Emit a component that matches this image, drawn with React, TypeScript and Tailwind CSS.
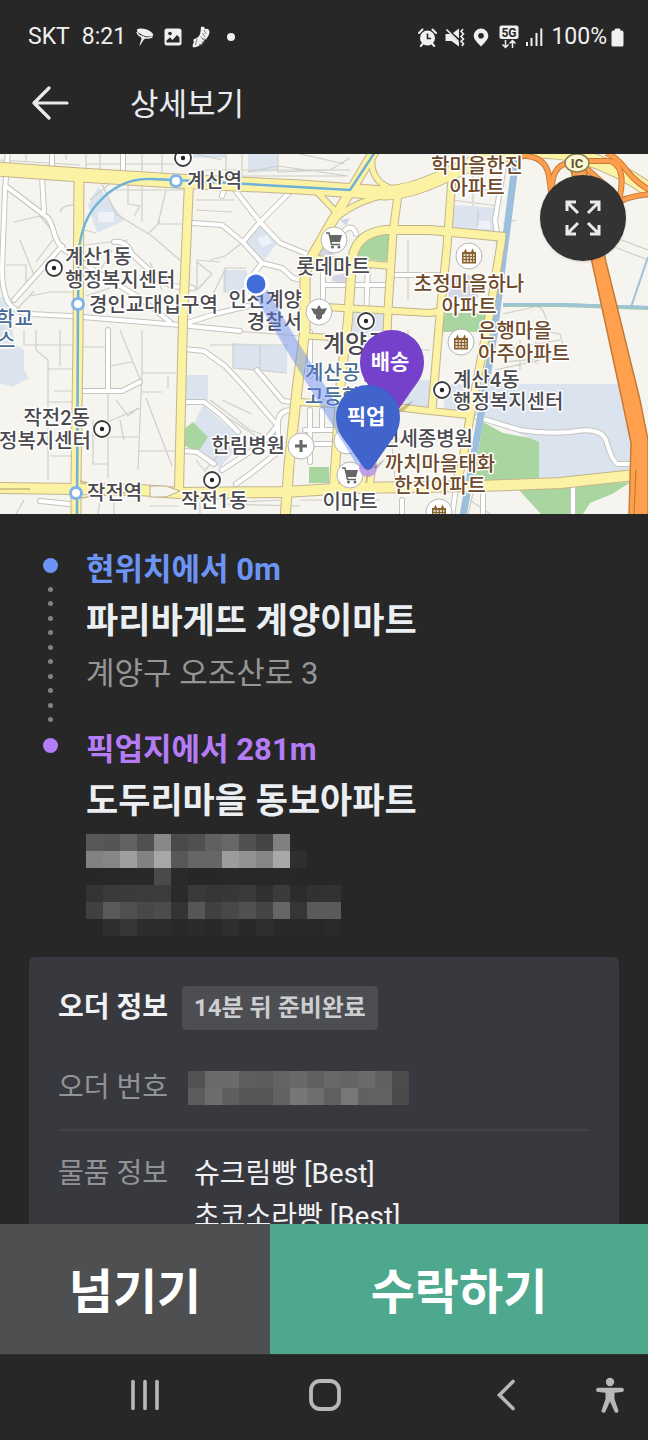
import type { ReactNode } from "react";

type MosaicProps = {
  rows: string[]
  className?: string
}

type StopProps = {
  distance: string
  name: string
  color: string
  dot: string
  last?: boolean
  children: ReactNode
}

type LabelProps = {
  x: number
  y: number
  text: string
  fill?: string
  anchor?: "start" | "middle" | "end"
  big?: boolean
}

const CELL = 17;

// two hex digits of grey per cell, ".." leaves the cell empty
const ADDRESS_MOSAIC = [
  "58 55 62 50 88 4a 50 60 68 50 44 80 .. .. ..",
  "82 86 9e 82 a8 58 66 66 9c 92 86 a8 2f .. ..",
  "27 28 28 29 4a 2a .. .. 28 28 28 28 .. .. ..",
  "34 3a 3b 3c 3c 2a 3a 36 37 3a 30 3b 2c 31 32",
  "40 5a 50 48 4c 34 56 40 48 50 45 66 36 5a 5a",
  ".. 2f 36 2c 2c 29 2b 29 2e 29 2e 29 28 28 2a",
];

const ORDER_MOSAIC = [
  "52 6a 6b 5e 5c 64 69 60 68 65 6b 60 4c",
  "5c 6d 5f 56 56 62 77 6e 60 78 61 63 4b",
];

const WHITE_ROADS = [
  "M8 150 L5 190 L2 270 Q2 290 8 302 Q15 313 30 314 L70 316 L180 325 L240 331",
  "M7 187 L48 218 Q52 224 55 236 Q60 250 72 254 L90 268 L140 298 L170 322",
  "M62 246 L14 300 M52 154 V167 M42 176 L44 212 M123 154 V172",
  "M114 242 Q126 240 132 254 L160 280 L172 286 L193 288",
  "M187 323 L215 314 L248 306",
  "M192 223 L222 225 L243 242 L262 263 L282 268 L293 278 L302 280",
  "M235 190 L260 222 L280 243 L307 254 M290 192 L260 222 L243 242 M262 263 L252 276",
  "M108 330 V390 M82 391 H122 L140 382",
  "M184 349 L204 351 L225 366 L242 384 L277 425",
  "M184 402 H204 L222 416 L238 432 M184 451 L197 452 L214 464",
  "M257 370 L283 401 L293 402 M292 410 Q279 410 278 422 V452",
  "M278 425 L262 444 L222 470 M278 452 L250 474 L236 484",
  "M310 332 V376 M310 410 V462 M305 430 H336 M312 444 H336 M322 410 V430",
  "M368 266 L366 320 M325 285 H390 M323 270 V304 M390 275 H438",
  "M343 232 Q352 222 356 234 M224 190 L222 196",
  "M477 417 L520 430 Q545 434 570 432 Q600 426 606 440 Q612 462 618 464 H632",
  "M573 486 V516 M483 488 V516 M456 488 L452 516 M402 500 V516 M40 501 L70 504",
  "M505 160 L495 220 L498 240",
];

const MINOR_ROADS =
  "M0 160 L80 165 M26 154 V163 M86 154 V173 L150 176 M100 154 V170 M142 154 V174 M162 154 V174 M86 164 H176 " +
  "M60 212 Q62 204 78 205 M66 154 V160 M14 222 L40 216 L60 240 M20 240 L36 280 M36 262 L56 236 M6 265 H26 V290 M30 296 L50 292 H74 M18 308 L34 291 " +
  "M100 180 L116 214 L124 219 L152 236 L182 262 M84 230 L96 233 M90 200 L112 182 M116 190 H184 M142 182 V222 M128 182 V204 L140 206 L134 216 M160 222 L148 234 M166 190 L158 224 H182 " +
  "M84 245 L128 240 M90 284 Q104 266 112 250 M86 296 L110 288 M150 262 L162 290 M196 260 L220 262 M196 200 H235 M196 210 L232 212 M197 262 V290 L212 274 Z " +
  "M24 330 V345 H74 M36 330 V350 L48 360 V480 M60 330 V366 M48 369 H74 M54 391 H72 M48 402 H74 M50 456 H74 " +
  "M108 390 V478 M82 347 H108 M120 330 L142 384 M110 366 L132 362 M142 330 V370 L138 470 M142 373 H176 M108 422 L140 408 M93 420 V464 H108 M108 437 H138 M142 392 H162 M168 376 V388 M116 400 L128 416 L138 408 M138 451 H176 M146 398 L172 466 M120 420 L124 440 " +
  "M195 154 L222 160 M226 154 V182 M242 154 V176 M248 172 L278 166 L348 176 M278 154 V172 L330 170 L350 158 M300 154 L345 164 M196 170 H350 M210 176 H345 " +
  "M210 260 L225 256 L243 242 M210 300 L225 270 M225 292 V268 H246 M223 330 L300 336 M210 345 H288 M233 343 V368 L287 373 M260 345 V370 M210 400 L250 430 L278 440 M216 410 L256 436 M222 400 L252 414 M196 460 L228 500 M232 440 L205 470 " +
  "M300 500 H380 M240 502 L280 500 M150 506 H178 M100 500 L98 514 M114 502 V514 M24 500 L16 514 M200 500 V514 M222 504 L300 506 M384 440 L430 440 M390 420 L395 480 " +
  "M408 240 V300 M408 330 V400 M395 350 H430 M452 200 L498 206 M473 172 V206 M460 190 H498 M478 210 V226 M503 224 L516 220 " +
  "M503 314 L530 308 Q545 300 548 330 M500 350 L560 340 M505 362 L566 356 L560 334 L540 330 M520 340 V370 M536 336 V364 M495 370 L540 360 M616 238 L648 250 M612 246 L648 260 M470 500 L490 514 M474 490 L468 514";

const YELLOW_ROADS = [
  { d: "M-5 169 L80 175 L176 181 L300 187 L385 193 Q410 192 440 178 L480 160 Q530 145 580 156 Q620 168 652 192", w: 13 },
  { d: "M79 175 L78 340 L76 480 V520", w: 9 },
  { d: "M189 183 L183 320 L179 490", w: 8 },
  { d: "M-5 488 L76 489 L140 490 L178 493 L285 492 L350 488 L480 486 L560 483 L635 475", w: 10 },
  { d: "M375 150 L350 192 L333 220 L310 260 L305 275 V330 L297 390 L289 465 L285 520", w: 9 },
  { d: "M505 237 L430 230 H385 Q354 234 352 262 L348 320 L341 380 L334 485", w: 8 },
  { d: "M398 195 L393 232 L388 310 L384 400", w: 7 },
  { d: "M452 178 L447 247 L440 315 L432 410", w: 7 },
  { d: "M502 237 L490 312 L480 365 L470 417 L462 465 L455 485", w: 7 },
  { d: "M307 258 L390 266 M308 306 L430 313 L442 311 M298 402 L335 404 M395 407 L430 411 L468 415", w: 6 },
  { d: "M317 192 L338 214 M336 218 Q360 198 397 193 M372 158 Q370 180 390 188 M306 336 L340 338", w: 5 },
  { d: "M372 425 L362 485 M377 425 L370 485", w: 6 },
];

const RINGS = [[183, 158], [54, 268], [102, 429], [212, 480], [366, 321], [442, 390]];
const STATIONS = [[176, 181], [78, 304], [76, 493]];

function Mosaic({ rows, className }: MosaicProps) {
  const grid = rows.map((row) => row.split(" "));
  const width = grid[0].length * CELL;
  const height = grid.length * CELL;
  return (
    <svg className={className} width={width} height={height} viewBox={`0 0 ${width} ${height}`} shapeRendering="crispEdges" aria-hidden="true">
      {grid.map((cells, r) =>
        cells.map((v, c) =>
          v === ".." ? null : (
            <rect key={`${r}-${c}`} x={c * CELL} y={r * CELL} width={CELL} height={CELL} fill={`#${v}${v}${v}`} />
          )
        )
      )}
    </svg>
  );
}

function StatusBar() {
  return (
    <div className="flex h-[74px] shrink-0 items-center justify-between pr-6 pl-7 text-[23px] text-[#f0f0f0]">
      <div className="flex items-center">
        <span>SKT</span>
        <span className="ml-3">8:21</span>
        <svg className="ml-2.5" width="18" height="20" viewBox="0 0 18 20">
          <ellipse cx="9" cy="5.500" rx="8.500" ry="3.300" fill="currentColor" transform="rotate(18 9 5.500)" />
          <path d="M1 5 Q2 9 8 10.500 Q14 12 16.500 9.500" fill="none" stroke="currentColor" strokeWidth="1.400" />
          <path d="M4.500 8 L10 10.500 L7.500 13 L4 18.500 L3.500 18 L5.500 12 Z" fill="currentColor" />
        </svg>
        <svg className="ml-2.5" width="18" height="18" viewBox="0 0 18 18">
          <rect x="0.500" y="0.500" width="17" height="17" rx="2.500" fill="currentColor" />
          <path d="M2.500 14.500 V12.500 L6 9.500 L8.500 12 L13 7 L15.500 9.500 V14.500 Z" fill="#272727" />
          <circle cx="6" cy="5.500" r="1.800" fill="#272727" />
        </svg>
        <svg className="ml-2.5" width="18" height="22" viewBox="0 0 18 22">
          <path d="M9 1 Q12 -0.500 13 3 Q17 2 17.500 6 Q17 11 12.500 14 Q9 21 1.500 21.500 Q-0.500 20 2 16 Q0 13 4 12.500 Q8 10 8.500 6 Z" fill="currentColor" />
          <path d="M12 4 L14 8 M10.500 7 L13 11 M9 10.500 L11.500 14 M5 13 L3.500 19 M11 13 L15 13.500 M9.500 16 L13 16.500 M7 18.500 L11 19" stroke="#666" strokeWidth="0.800" fill="none" />
        </svg>
        <span className="ml-[17px] size-2 rounded-full bg-[#f0f0f0]" />
      </div>
      <div className="flex items-center">
        <svg width="19" height="19" viewBox="0 0 19 19">
          <circle cx="9.500" cy="10" r="7.500" fill="currentColor" />
          <path d="M1 5 L4.500 1.500 M18 5 L14.500 1.500 M5 15.500 L2.800 18 M14 15.500 L16.200 18" stroke="currentColor" strokeWidth="2" strokeLinecap="round" />
          <path d="M9.500 5.500 V10.500 H13" stroke="#272727" strokeWidth="1.600" fill="none" />
        </svg>
        <svg className="ml-2" width="20" height="19" viewBox="0 0 20 19">
          <path d="M0.500 6 H5 L14 14.500 V18.500 L6.500 13 H0.500 Z" fill="currentColor" />
          <path d="M8 5 L14 0.500 V10.500 Z" fill="currentColor" />
          <path d="M1.500 1.500 L13.500 13.500" stroke="currentColor" strokeWidth="1.600" />
          <path d="M18 1 L16 3.500 L18.500 6 L16 8.500 L18.500 11 L16 13.500 L18.500 15.500 L17 18" stroke="currentColor" strokeWidth="1.600" fill="none" />
        </svg>
        <svg className="ml-2" width="16" height="19" viewBox="0 0 16 19">
          <path fillRule="evenodd" d="M8 0.500 A7.300 7.300 0 0 0 0.700 7.800 C0.700 12 5 15 8 18.500 C11 15 15.300 12 15.300 7.800 A7.300 7.300 0 0 0 8 0.500 Z M8 5 A2.800 2.800 0 1 1 8 10.600 A2.800 2.800 0 1 1 8 5 Z" fill="currentColor" />
        </svg>
        <svg className="ml-2.5" width="20" height="24" viewBox="0 0 20 24">
          <rect x="0.500" y="0.500" width="19" height="13.500" rx="2" fill="currentColor" />
          <text x="10" y="11.500" textAnchor="middle" fontSize="12" fontWeight="700" fill="#272727">5G</text>
          <path d="M6.500 15 V22 M3.500 19.500 L6.500 22.500 L9.500 19.500 M13.500 23 V16 M10.500 18.500 L13.500 15.500 L16.500 18.500" stroke="currentColor" strokeWidth="1.500" fill="none" />
        </svg>
        <svg className="ml-1.5" width="18" height="18" viewBox="0 0 18 18">
          <path d="M2 14 V18 M6.500 10 V18 M11.500 5 V18 M16.300 0.500 V18" stroke="currentColor" strokeWidth="2" />
        </svg>
        <span className="ml-2">100%</span>
        <svg className="ml-1" width="13" height="19" viewBox="0 0 13 19">
          <path d="M3.500 2.500 Q3.500 0.500 5 0.500 H8 Q9.500 0.500 9.500 2.500 H10.500 Q12.500 2.500 12.500 4.500 V17 Q12.500 18.500 11 18.500 H2 Q0.500 18.500 0.500 17 V4.500 Q0.500 2.500 2.500 2.500 Z" fill="currentColor" />
        </svg>
      </div>
    </div>
  );
}

function MapLabel({ x, y, text, fill = "#4a4a4f", anchor = "start", big }: LabelProps) {
  return (
    <text x={x} y={y} fill={fill} textAnchor={anchor} fontSize={big ? 24 : 20} fontWeight="500" stroke="#fff" strokeWidth="3" strokeLinejoin="round" paintOrder="stroke">
      {text}
    </text>
  );
}

function Poi({ x, y, children }: { x: number; y: number; children?: ReactNode }) {
  return (
    <g transform={`translate(${x} ${y})`}>
      <circle r="13" fill="#fff" stroke="#b5b5b5" strokeWidth="1" />
      {children}
    </g>
  );
}

function Cart() {
  return (
    <g>
      <path d="M-5 -5 H8 L6 2 H-3 Z" fill="#666" />
      <path d="M-8 -7 H-5 L-2.500 4.500 H6" fill="none" stroke="#666" strokeWidth="1.500" />
      <circle cx="-1.500" cy="7" r="1.500" fill="#666" />
      <circle cx="5" cy="7" r="1.500" fill="#666" />
    </g>
  );
}

function Building() {
  return (
    <g>
      <path d="M-7 -4 H-5 L-3.500 -7.500 L-2 -4 H2 L3.500 -7.500 L5 -4 H7 V7.500 H-7 Z" fill="#8a6230" />
      <path d="M-5.500 -1 H5.500 M-5.500 2 H5.500 M-5.500 5 H5.500" stroke="#fff" strokeWidth="1.600" strokeDasharray="2 1.200" />
    </g>
  );
}

function Pin({ x, y, color, text }: { x: number; y: number; color: string; text: string }) {
  return (
    <g transform={`translate(${x} ${y})`}>
      <path d="M-32 0 A32 32 0 0 1 32 0 C32 13 26 20 20 28 L4 51 Q0 55 -4 51 L-20 28 C-26 20 -32 13 -32 0 Z" fill={color} />
      <text x="-2" y="7" textAnchor="middle" fontSize="21" fontWeight="700" fill="#fff">{text}</text>
    </g>
  );
}

function AreaMap() {
  const brown = "#6e4a2c";
  const blue = "#4a6c92";
  return (
    <svg className="block h-full w-full" viewBox="0 154 648 360" preserveAspectRatio="xMidYMid slice" role="img" aria-label="지도">
      <rect x="0" y="154" width="648" height="360" fill="#f5f4ee" />

      <g fill="#dbe4ee">
        <path d="M98 187 L125 220 L97 233 L88 205 Z" />
        <path d="M260 222 L278 242 L262 263 L243 242 Z" />
        <path d="M248 153 H278 V171 L248 173 Z M193 153 H226 V158 H193 Z" />
        <path d="M223 270 H247 V293 H223 Z M455 205 L497 208 L495 232 L452 228 Z" />
        <path d="M183 375 H208 V400 H183 Z M233 343 L287 346 V373 L233 368 Z" />
        <path d="M203 405 L243 440 L220 468 L195 452 L183 445 Z" />
        <path d="M0 297 H10 L14 344 L24 350 L24 370 L29 378 L12 387 L0 383 Z" />
        <path d="M352 310 H385 V337 H352 Z M395 380 H440 L436 410 L395 405 Z" />
        <path d="M446 384 H618 L631 443 V474 L539 478 V442 L500 425 L477 415 H443 Z" />
      </g>
      <path d="M450 275 H478 V298 H448 Z M340 220 L350 218 L346 226 Z M332 276 L347 273 V283 L332 281 Z M318 245 L335 255 H320 Z" fill="#d5d5e8" />
      <path d="M98 212 h16 v10 h-16 Z M257 238 l10 -3 l5 8 l-10 4 Z M478 221 h12 v8 h-12 Z" fill="#eef2f8" />
      <g fill="#a9d6a0">
        <path d="M357 258 L390 262 L391 232 L374 233 Q361 238 357 258 Z" />
        <path d="M445 313 H489 L484 332 H441 Z" />
        <path d="M483 422 L503 433 L530 438 L539 442 V480 L473 482 Z" />
        <path d="M518 489 L571 485 V514 H541 Z M576 485 L631 482 L612 494 L590 503 L583 514 H576 Z" />
        <path d="M193 422 L208 437 L198 452 L183 445 V430 Z M309 467 H329 V483 H309 Z" />
      </g>

      <path d={MINOR_ROADS} fill="none" stroke="#cfcfca" strokeWidth="1.200" />
      <g fill="none" strokeLinejoin="round" strokeLinecap="round">
        {WHITE_ROADS.map((d) => <path key={d} d={d} stroke="#c4c4c2" strokeWidth="6" />)}
        {WHITE_ROADS.map((d) => <path key={d} d={d} stroke="#fff" strokeWidth="4" />)}
      </g>

      <g fill="none">
        <path d="M503 305 L560 305 L648 308" stroke="#9fc9bf" strokeWidth="4" />
        <path d="M503 304 L560 304 L648 307 M648 257 L631 307" stroke="#9cc2dc" strokeWidth="2" />
        <path d="M517 150 L503 260 L494 335 L480 420 L463 516" stroke="#9bbfdc" strokeWidth="7" />
      </g>

      <g fill="none" strokeLinejoin="round">
        {YELLOW_ROADS.map((road) => <path key={road.d} d={road.d} stroke="#c4b48c" strokeWidth={road.w + 2} />)}
        {YELLOW_ROADS.map((road) => <path key={road.d} d={road.d} stroke="#fbf2a4" strokeWidth={road.w} />)}
      </g>
      <path d="M150 486 H166 L180 491 L166 497 H150 Z" fill="#f5f4ee" stroke="#bfae86" strokeWidth="1" />
      <path d="M0 489 H30 M80 481 L100 486 M80 498 L130 492" stroke="#c9b878" strokeWidth="1.500" />
      <path d="M77 516 L78 304 L79 250 Q82 220 98 203 Q120 178 150 179 L176 180 L350 190 L375 152" fill="none" stroke="#6fb1d8" strokeWidth="2.500" />

      <g fill="none" strokeLinecap="butt">
        {["#c67a35", "#ff9f4d"].map((stroke, i) => (
          <path
            key={stroke}
            stroke={stroke}
            strokeWidth={i === 0 ? 6 : 4}
            d="M518 156 Q545 154 549 176 L552 200 M570 163 Q550 164 552 196 M588 161 H610 Q626 166 620 196 M586 168 L622 200 M606 153 Q616 156 628 172 Q638 184 650 190 M612 206 Q625 196 650 194"
          />
        ))}
      </g>
      <path d="M571 170 H586 L606 262 L624 335 L640 400 L648 440 V516 H629 L631 443 L622 400 L609 340 L592 262 Z" fill="#ffa04f" stroke="#c67a35" strokeWidth="1.500" />
      <path d="M634 514 L636 470" stroke="#c67a35" strokeWidth="1.200" />
      <ellipse cx="577" cy="163" rx="12" ry="9" fill="#fdf8d4" stroke="#8c8350" strokeWidth="1.500" />
      <text x="577" y="168" textAnchor="middle" fontSize="13" fontWeight="700" fill="#5c5330">IC</text>

      <g>
        {RINGS.map(([x, y]) => (
          <g key={`${x}-${y}`}>
            <circle cx={x} cy={y} r="10" fill="#fff" />
            <circle cx={x} cy={y} r="8" fill="#fff" stroke="#3a3a3a" strokeWidth="1.800" />
            <circle cx={x} cy={y} r="2.200" fill="#222" />
          </g>
        ))}
        {STATIONS.map(([x, y]) => (
          <circle key={`${x}-${y}`} cx={x} cy={y} r="5.500" fill="#fff" stroke="#7fb4ea" strokeWidth="3" />
        ))}
      </g>

      <MapLabel x={187} y={188} text="계산역" />
      <MapLabel x={65} y={264} text="계산1동" />
      <MapLabel x={65} y={287} text="행정복지센터" />
      <MapLabel x={89} y={312} text="경인교대입구역" />
      <MapLabel x={-4} y={326} text="학교" fill={blue} />
      <MapLabel x={-3} y={348} text="스" fill={blue} />
      <MapLabel x={90} y={425} text="작전2동" anchor="end" />
      <MapLabel x={91} y={448} text="정복지센터" anchor="end" />
      <MapLabel x={87} y={500} text="작전역" />
      <MapLabel x={181} y={508} text="작전1동" />
      <MapLabel x={285} y={453} text="한림병원" anchor="end" />
      <MapLabel x={302} y={307} text="인천계양" anchor="end" />
      <MapLabel x={302} y={329} text="경찰서" anchor="end" />
      <MapLabel x={333} y={274} text="롯데마트" anchor="middle" />
      <MapLabel x={323} y={352} text="계양구" big />
      <MapLabel x={305} y={380} text="계산공업" fill={blue} />
      <MapLabel x={305} y={404} text="고등학교" fill={blue} />
      <MapLabel x={350} y={509} text="이마트" anchor="middle" />
      <MapLabel x={473} y={446} text="인천세종병원" anchor="end" />
      <MapLabel x={440} y={471} text="까치마을태화" anchor="middle" fill={brown} />
      <MapLabel x={440} y={493} text="한진아파트" anchor="middle" fill={brown} />
      <MapLabel x={453} y={387} text="계산4동" />
      <MapLabel x={453} y={409} text="행정복지센터" />
      <MapLabel x={478} y={338} text="은행마을" fill={brown} />
      <MapLabel x={478} y={361} text="아주아파트" fill={brown} />
      <MapLabel x={469} y={291} text="초정마을하나" anchor="middle" fill={brown} />
      <MapLabel x={469} y={314} text="아파트" anchor="middle" fill={brown} />
      <MapLabel x={477} y={173} text="학마을한진" anchor="middle" fill={brown} />
      <MapLabel x={477} y={195} text="아파트" anchor="middle" fill={brown} />

      <Poi x={334} y={240}><Cart /></Poi>
      <Poi x={319} y={312}>
        <path d="M0 -7 L2.500 -3 L8 -4 L5 2 L3 3 V6 L0 8 L-3 6 V3 L-5 2 L-8 -4 L-2.500 -3 Z" fill="#666" />
      </Poi>
      <Poi x={301} y={446}>
        <path d="M-6 0 H6 M0 -6 V6" stroke="#666" strokeWidth="3" />
      </Poi>
      <Poi x={347} y={441} />
      <Poi x={469} y={256}><Building /></Poi>
      <Poi x={461} y={342}><Building /></Poi>
      <Poi x={439} y={512}><Building /></Poi>

      <path d="M256 284 L285 334 L365 465" fill="none" stroke="#6488f2" strokeOpacity="0.450" strokeWidth="14" strokeLinejoin="round" />
      <Poi x={350} y={475}><Cart /></Poi>
      <circle cx="368" cy="468" r="9" fill="#b58cf0" fillOpacity="0.800" />
      <circle cx="256" cy="284" r="12" fill="#fff" />
      <circle cx="256" cy="284" r="9.500" fill="#406fdc" />
      <path d="M394 412 L414 400 L404 411 Z M372 468 L386 458 L378 468 Z" fill="#000" fillOpacity="0.200" />
      <Pin x={392} y={362} color="#7541cb" text="배송" />
      <Pin x={368} y={417} color="#4064cc" text="픽업" />
    </svg>
  );
}

function Stop({ distance, name, color, dot, last, children }: StopProps) {
  return (
    <li className="flex gap-7">
      <div className="flex flex-col items-center pt-2">
        <span className={`size-[15px] rounded-full ${dot}`} />
        {last ? null : (
          <div className="flex flex-1 flex-col justify-between pt-3.5 pb-2">
            {Array.from({ length: 10 }, (_, i) => (
              <span key={i} className="size-[5px] rounded-full bg-[#828282]" />
            ))}
          </div>
        )}
      </div>
      <div className={`flex flex-col gap-2.5 ${last ? "" : "pb-9"}`}>
        <p className={`text-[31px] leading-[40px] font-bold ${color}`}>{distance}</p>
        <h2 className="text-[35px] leading-[44px] font-bold text-[#eceff2]">{name}</h2>
        {children}
      </div>
    </li>
  );
}

function OrderCard() {
  return (
    <section className="mx-[29px] mt-[21px] rounded-md bg-[#38393e] px-[29px] pt-[29px] pb-8 text-[28px]">
      <div className="flex items-center gap-3.5">
        <h3 className="font-bold text-[#f0f1f3]">오더 정보</h3>
        <span className="rounded-sm bg-[#4d4e52] px-3 text-[24px] leading-[44px] font-bold text-[#cdced1]">14분 뒤 준비완료</span>
      </div>
      <dl>
        <div className="mt-[38px] flex items-center gap-5 border-b-2 border-[#424347] pb-[21px]">
          <dt className="leading-[40px] text-[#929397]">오더 번호</dt>
          <dd><Mosaic rows={ORDER_MOSAIC} /></dd>
        </div>
        <div className="flex gap-[26px] pt-[21px] leading-[43px]">
          <dt className="text-[#929397]">물품 정보</dt>
          <dd className="text-[#f0f1f3]">
            <p>슈크림빵 [Best]</p>
            <p>초코소라빵 [Best]</p>
          </dd>
        </div>
      </dl>
    </section>
  );
}

function SystemNav() {
  return (
    <nav className="flex h-[86px] shrink-0 items-center border-t border-[#303030] pr-6 pb-1.5 pl-[55px] text-[#b8b8b8]">
      <button type="button" aria-label="최근 앱" className="flex flex-1 justify-center">
        <svg width="30" height="32" viewBox="0 0 30 32">
          <path d="M3 2.500 V29.500 M15 2.500 V29.500 M27 2.500 V29.500" stroke="currentColor" strokeWidth="3.600" strokeLinecap="round" />
        </svg>
      </button>
      <button type="button" aria-label="홈" className="flex flex-1 justify-center">
        <svg width="32" height="32" viewBox="0 0 32 32">
          <rect x="2" y="2" width="28" height="28" rx="9" fill="none" stroke="currentColor" strokeWidth="3.800" />
        </svg>
      </button>
      <button type="button" aria-label="이전" className="flex flex-1 justify-center">
        <svg width="20" height="32" viewBox="0 0 20 32">
          <path d="M17 2.500 L3.500 16 L17 29.500" fill="none" stroke="currentColor" strokeWidth="3.600" strokeLinecap="round" />
        </svg>
      </button>
      <button type="button" aria-label="접근성">
        <svg width="28" height="36" viewBox="0 0 28 36">
          <circle cx="14" cy="5" r="4.200" fill="currentColor" />
          <path d="M2.200 10.800 H25.800 A2 2 0 0 1 25.800 15 L18.500 15.800 V22 L22.300 33 A2 2 0 0 1 18.500 34.500 L14 24.500 L9.500 34.500 A2 2 0 0 1 5.700 33 L9.500 22 V15.800 L2.200 15 A2 2 0 0 1 2.200 10.800 Z" fill="currentColor" />
        </svg>
      </button>
    </nav>
  );
}

export default function App() {
  return (
    <div lang="ko" className="flex h-screen flex-col bg-[#272727] font-['Roboto','Noto_Sans_CJK_KR',sans-serif]">
      <StatusBar />
      <header className="flex h-20 shrink-0 items-center pb-[22px] pl-8 text-[#e8ebee]">
        <button type="button" aria-label="뒤로">
          <svg width="37" height="34" viewBox="0 0 37 34">
            <path d="M17 2 L2 17 L17 32 M2 17 H35" fill="none" stroke="currentColor" strokeWidth="3.200" strokeLinecap="round" strokeLinejoin="round" />
          </svg>
        </button>
        <h1 className="ml-[61px] pt-1 text-[31px]">상세보기</h1>
      </header>

      <main className="min-h-0 flex-1 overflow-y-auto [scrollbar-width:none]">
        <div className="relative aspect-[9/5]">
          <AreaMap />
          <button type="button" aria-label="지도 확대" className="absolute top-[21px] right-[22px] flex size-[86px] items-center justify-center rounded-full bg-[#333] text-[#e8ebee] shadow">
            <svg width="36" height="36" viewBox="0 0 36 36">
              <path d="M2 11 V2 H11 M2 2 L13 13 M25 2 H34 V11 M34 2 L23 13 M2 25 V34 H11 M2 34 L13 23 M34 25 V34 H25 M34 34 L23 23" fill="none" stroke="currentColor" strokeWidth="3" />
            </svg>
          </button>
        </div>

        <ol className="pt-9 pl-[43px]">
          <Stop distance="현위치에서 0m" name="파리바게뜨 계양이마트" color="text-[#6c94f5]" dot="bg-[#6c94f5]">
            <p className="text-[31px] leading-[40px] text-[#959595]">계양구 오조산로 3</p>
          </Stop>
          <Stop distance="픽업지에서 281m" name="도두리마을 동보아파트" color="text-[#b57cf8]" dot="bg-[#b57cf8]" last>
            <Mosaic rows={ADDRESS_MOSAIC} />
          </Stop>
        </ol>

        <OrderCard />
      </main>

      <div className="flex h-[130px] shrink-0 text-[48px] font-bold text-white">
        <button type="button" className="w-5/12 bg-[#4e4f51] pt-2">넘기기</button>
        <button type="button" className="w-7/12 bg-[#4da88e] pt-2">수락하기</button>
      </div>
      <SystemNav />
    </div>
  );
}
